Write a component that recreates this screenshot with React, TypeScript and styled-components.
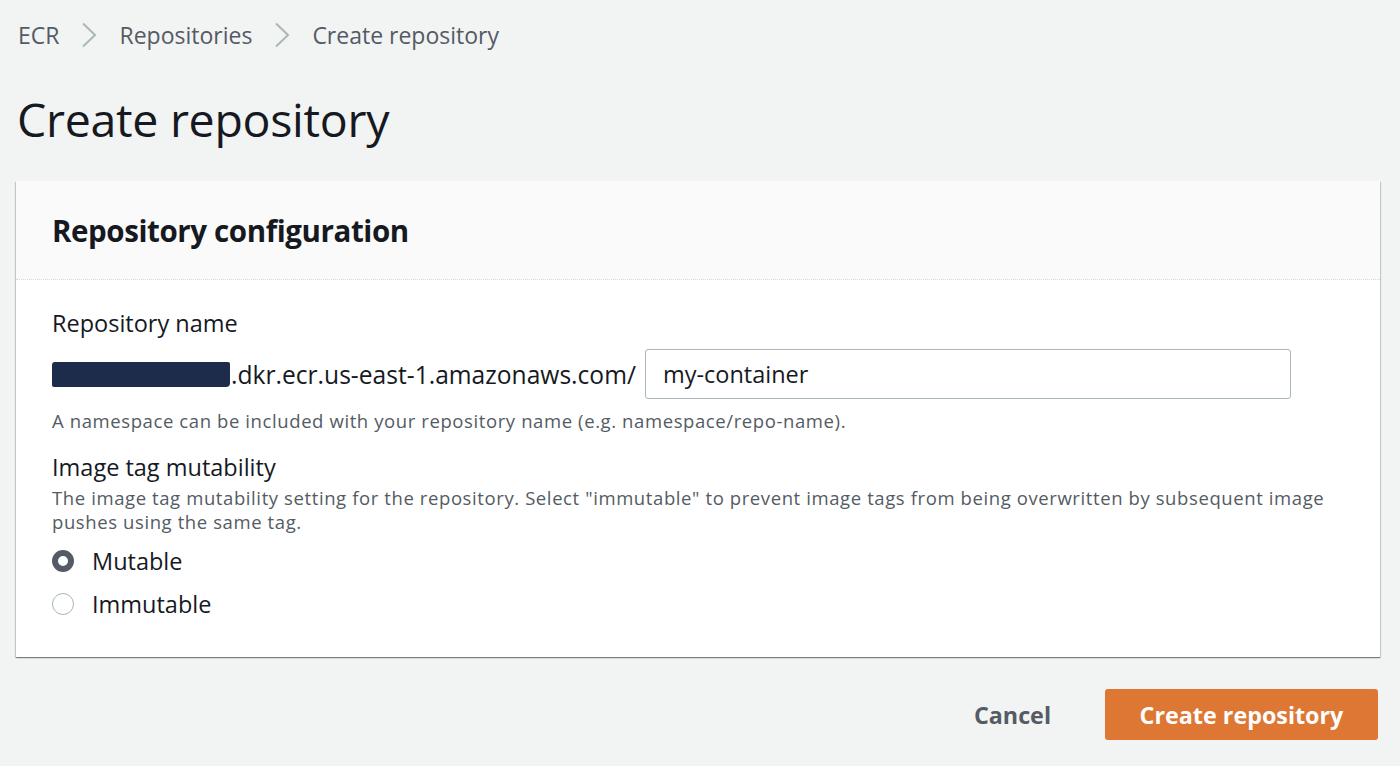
import React from "react";
import styled, { createGlobalStyle } from "styled-components";

const Global = createGlobalStyle`
  html, body { margin: 0; padding: 0; background: #f2f3f3; }
  body { font-family: "Open Sans", "Noto Sans", "Liberation Sans", sans-serif; color: #16191f; }
  * { box-sizing: border-box; }
`;

const Page = styled.div`
  width: 1400px;
  height: 766px;
  padding: 0 20px 0 16px;
  background: #f2f3f3;
  display: flex;
  flex-direction: column;
`;

const Breadcrumbs = styled.nav`
  height: 69px;
  display: flex;
  align-items: center;
  gap: 22px;
  padding-left: 2px;
  font-size: 23px;
  color: #545b64;
`;

const Crumb = styled.span`
  color: #545b64;
`;

const Chevron = () => (
  <svg width="16" height="26" viewBox="0 0 16 26" aria-hidden>
    <path d="M2 1.5 L14 13 L2 24.5" fill="none" stroke="#aab7b8" strokeWidth="2" />
  </svg>
);

const Title = styled.h1`
  margin: 0;
  height: 112px;
  padding-left: 1px;
  display: flex;
  align-items: center;
  font-size: 46.5px;
  font-weight: 400;
  color: #16191f;
  letter-spacing: -0.3px;
  padding-bottom: 12px;
`;

const Card = styled.section`
  background: #fff;
  box-shadow: 0 1px 1px 0 rgba(0, 28, 36, 0.35), 1px 1px 1px 0 rgba(0, 28, 36, 0.15),
    -1px 1px 1px 0 rgba(0, 28, 36, 0.15);
  width: 1364px;
`;

const CardHeader = styled.header`
  height: 99px;
  background: #fafafa;
  border-bottom: 1px dotted #d5dbdb;
  display: flex;
  align-items: center;
  padding: 0 36px;
`;

const CardTitle = styled.h2`
  margin: 0;
  font-size: 29.5px;
  font-weight: 700;
  color: #16191f;
  letter-spacing: -0.4px;
`;

const CardBody = styled.div`
  padding: 28px 36px 32px;
  display: flex;
  flex-direction: column;
`;

const Label = styled.div`
  font-size: 23.5px;
  line-height: 30px;
  color: #16191f;
`;

const UriRow = styled.div`
  margin-top: 11px;
  display: flex;
  align-items: center;
  gap: 9px;
`;

const Prefix = styled.div`
  display: flex;
  align-items: center;
  font-size: 24.6px;
  color: #16191f;
`;

const Redacted = styled.span`
  display: inline-block;
  width: 178px;
  height: 25px;
  background: #1d2c4a;
  border-radius: 3px 2px 4px 2px;
  margin-right: 1px;
`;

const Input = styled.div`
  width: 646px;
  height: 50px;
  border: 1px solid #aab7b8;
  border-radius: 3px;
  display: flex;
  align-items: center;
  padding: 0 17px;
  font-size: 23.5px;
  color: #16191f;
  background: #fff;
`;

const Hint = styled.div<{ $top?: number }>`
  margin-top: ${(p) => p.$top ?? 0}px;
  font-size: 18.5px;
  line-height: 24px;
  color: #545b64;
  letter-spacing: 0.6px;
`;

const Section = styled.div`
  margin-top: 19px;
  display: flex;
  flex-direction: column;
`;

const Description = styled.div`
  max-width: 1300px;
  font-size: 18.5px;
  line-height: 24px;
  color: #545b64;
  letter-spacing: 0.6px;
  margin-top: 4px;
`;

const RadioGroup = styled.div`
  margin-top: 5px;
  display: flex;
  flex-direction: column;
`;

const RadioRow = styled.label`
  height: 43px;
  display: flex;
  align-items: center;
  gap: 18px;
  font-size: 23.5px;
  color: #16191f;
`;

const RadioDot = styled.span<{ $checked?: boolean }>`
  width: 22px;
  height: 22px;
  border-radius: 50%;
  border: ${(p) => (p.$checked ? "6px solid #545b64" : "1.5px solid #aab7b8")};
  background: #fff;
`;

const Actions = styled.div`
  flex: 1;
  display: flex;
  justify-content: flex-end;
  align-items: flex-start;
  padding-top: 32px;
  padding-right: 2px;
  gap: 54px;
`;

const LinkButton = styled.button`
  height: 51px;
  border: none;
  background: transparent;
  font-family: inherit;
  font-size: 23.3px;
  font-weight: 700;
  color: #545b64;
  padding: 0;
`;

const PrimaryButton = styled.button`
  width: 273px;
  height: 51px;
  border: none;
  border-radius: 3px;
  background: #dd7733;
  color: #fff;
  font-family: inherit;
  font-size: 23.3px;
  font-weight: 700;
`;

export default function App() {
  return (
    <>
      <Global />
      <Page>
        <Breadcrumbs>
          <Crumb>ECR</Crumb>
          <Chevron />
          <Crumb>Repositories</Crumb>
          <Chevron />
          <Crumb>Create repository</Crumb>
        </Breadcrumbs>
        <Title>Create repository</Title>
        <Card>
          <CardHeader>
            <CardTitle>Repository configuration</CardTitle>
          </CardHeader>
          <CardBody>
            <Label>Repository name</Label>
            <UriRow>
              <Prefix>
                <Redacted />
                .dkr.ecr.us-east-1.amazonaws.com/
              </Prefix>
              <Input>my-container</Input>
            </UriRow>
            <Hint $top={10}>
              A namespace can be included with your repository name (e.g. namespace/repo-name).
            </Hint>
            <Section>
              <Label>Image tag mutability</Label>
              <Description>
                The image tag mutability setting for the repository. Select "immutable" to prevent image
                tags from being overwritten by subsequent image pushes using the same tag.
              </Description>
              <RadioGroup>
                <RadioRow>
                  <RadioDot $checked />
                  Mutable
                </RadioRow>
                <RadioRow>
                  <RadioDot />
                  Immutable
                </RadioRow>
              </RadioGroup>
            </Section>
          </CardBody>
        </Card>
        <Actions>
          <LinkButton>Cancel</LinkButton>
          <PrimaryButton>Create repository</PrimaryButton>
        </Actions>
      </Page>
    </>
  );
}
